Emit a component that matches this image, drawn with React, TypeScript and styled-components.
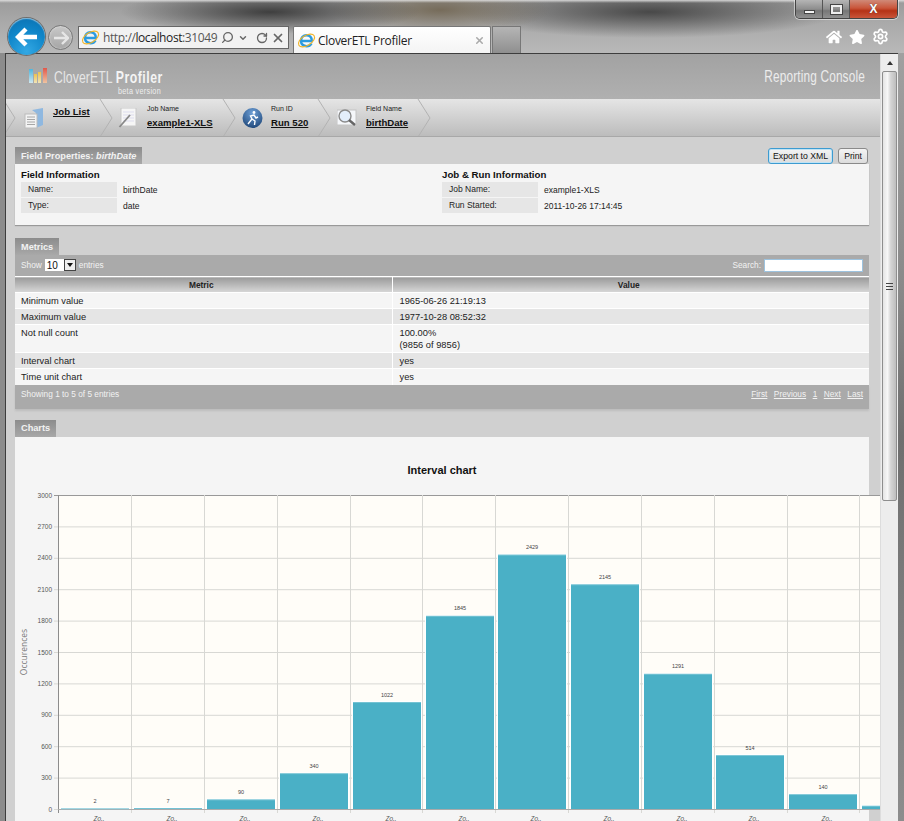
import React from "react";
import styled, { createGlobalStyle } from "styled-components";
import { Search, ChevronDown, RotateCw, X, Settings } from "lucide-react";
import { FaHome, FaStar } from "react-icons/fa";

const Global = createGlobalStyle`
  html, body { margin: 0; padding: 0; background: #888; }
  * { box-sizing: border-box; }
  body { font-family: "Liberation Sans", Arial, sans-serif; font-size: 9px; color: #222; }
`;

const Frame = styled.div`
  width: 904px; height: 821px; overflow: hidden; display: flex; flex-direction: column;
  background:
    linear-gradient(180deg, rgba(235,235,235,.8) 0, rgba(235,235,235,0) 3px),
    radial-gradient(ellipse 150px 22px at 270px 12px, rgba(45,45,45,.85), rgba(45,45,45,0)),
    radial-gradient(ellipse 110px 24px at 440px 10px, rgba(100,85,60,.7), rgba(100,85,60,0)),
    radial-gradient(ellipse 190px 26px at 650px 12px, rgba(50,50,50,.8), rgba(50,50,50,0)),
    linear-gradient(180deg, #9a9a9a 0, #a9a9a9 22px, #b9b9b9 53px);
`;
const Caption = styled.div`height: 19px; display: flex; justify-content: flex-end; padding-right: 6px; flex: none;`;
const WinControls = styled.div`
  display: flex; height: 19px; width: 103px; border: 1px solid #444; border-top: 0;
  border-radius: 0 0 5px 5px; overflow: hidden; box-shadow: 0 0 0 1px rgba(255,255,255,.5);
`;
const WinBtn = styled.div<{ $close?: boolean; $w: number }>`
  width: ${p => p.$w}px; display: flex; align-items: center; justify-content: center;
  border-right: 1px solid #555;
  background: ${p => p.$close
    ? "linear-gradient(180deg,#d08a78 0,#c9553a 45%,#b53216 60%,#c9553a 100%)"
    : "linear-gradient(180deg,#b5b5b5 0,#8e8e8e 50%,#777 60%,#909090 100%)"};
  &:last-child { border-right: 0; }
`;
const MinGlyph = styled.span`width: 11px; height: 4px; margin-top: 6px; background: #f4f4f4; border: 1px solid #444;`;
const MaxGlyph = styled.span`width: 11px; height: 9px; background: transparent; border: 2px solid #eee; outline: 1px solid #444; outline-offset: 0;`;
const CloseGlyph = styled.span`color: #fff; font: bold 12px "Liberation Sans", sans-serif; text-shadow: 0 0 1px #333; line-height: 1;`;

const NavBar = styled.div`height: 34px; flex: none; display: flex; align-items: flex-start; padding: 7px 0 0 8px; position: relative;`;
const BackBtn = styled.div`
  width: 37px; height: 37px; margin-top: -8px; flex: none; border-radius: 50%; display: flex; align-items: center; justify-content: center;
  background: radial-gradient(circle at 50% 90%, #33a8e4 0, #0f86c9 55%, #0a6eae 100%);
  box-shadow: 0 0 0 1px #6d6d6d, inset 0 1px 1px rgba(255,255,255,.5); z-index: 2;
`;
const ForwardBtn = styled.div`
  width: 25px; height: 25px; margin: -1px 0 0 3px; flex: none; border-radius: 50%; display: flex; align-items: center; justify-content: center;
  background: linear-gradient(180deg,#c8c8c8,#a6a6a6); border: 1px solid #777;
  box-shadow: inset 0 0 2px #eee;
`;
const AddressBar = styled.div`
  width: 211px; height: 23px; margin-left: 5px; flex: none; display: flex; align-items: center; padding: 0 2px 0 2px;
  background: #f2f2f2; border: 1px solid #666; color: #555;
  font: 12px "Open Sans", sans-serif; letter-spacing: -.4px; white-space: nowrap;
  b { font-weight: 400; color: #222; }
`;
const AddressText = styled.span`margin: 0 4px 0 3px;`;
const AddressIcons = styled.span`display: flex; align-items: center; gap: 2px; color: #666; margin-left: 0;`;
const BrowserTab = styled.div`
  width: 198px; height: 27px; margin-left: 4px; flex: none; display: flex; align-items: center; padding: 0 5px 0 3px; gap: 2px;
  background: linear-gradient(180deg,#fff,#f4f4f4); border: 1px solid #777; border-bottom: 0; border-radius: 2px 2px 0 0;
  font: 12px "Open Sans", sans-serif; letter-spacing: -.3px; color: #222;
`;
const TabTitle = styled.span`flex: 1; white-space: nowrap;`;
const NewTab = styled.div`width: 29px; height: 27px; flex: none; margin-left: 1px; background: linear-gradient(180deg,#b5b5b5,#8f8f8f); border: 1px solid #777; border-bottom: 0;`;
const ToolIcons = styled.div`margin-left: auto; display: flex; align-items: center; gap: 7px; padding: 2px 15px 0 0; color: #fff;`;

const Body = styled.div`flex: 1; display: flex; min-height: 0; padding-left: 5px;
  box-shadow: inset 5px 0 0 #8c8c8c;`;
const Viewport = styled.div`flex: 1; display: flex; min-width: 0; border: 1px solid #3d3d3d; border-bottom: 0; background: #d0d0d0;`;
const Page = styled.div`width: 874px; height: 100%; overflow: hidden; flex: none; background: #d0d0d0;`;
const Bezel = styled.div`width: 6px; flex: none;
  background: linear-gradient(180deg,#a0a0a0,#8a8a8a 30%,#6f6f6f 50%,#8d8d8d 100%);`;

const ScrollBar = styled.div`flex: 1; background: #ededed; border-left: 1px solid #ddd; padding: 0 1px; display: flex; flex-direction: column; align-items: center;`;
const ScrollUp = styled.div`height: 17px; display: flex; align-items: center; justify-content: center;
  &::before { content: ""; border: 3px solid transparent; border-bottom: 4px solid #333; border-top: 0; }`;
const Thumb = styled.div`
  width: 15px; height: 430px; border: 1px solid #8e8e8e; border-radius: 2px; display: flex; align-items: center; justify-content: center;
  background: linear-gradient(90deg,#e4e4e4 0,#f7f7f7 35%,#d4d4d4 60%,#bdbdbd 100%);
`;
const Grip = styled.span`width: 7px; height: 7px; border-top: 1px solid #444; border-bottom: 1px solid #444; position: relative;
  &::after { content: ""; position: absolute; left: 0; right: 0; top: 2px; height: 1px; background: #444; }`;

const Header = styled.header`height: 45px; display: flex; justify-content: space-between; padding: 14px 15px 0 23px;
  background: linear-gradient(180deg,#a2a2a2,#b0b0b0);`;
const Logo = styled.div`display: flex; align-items: flex-start; gap: 6px;`;
const LogoBlock = styled.div`width: 107px; display: flex; flex-direction: column;`;
const LogoText = styled.div`font: 17px "Liberation Sans", sans-serif; color: #e6e6e6; line-height: 20px; letter-spacing: .15px; white-space: nowrap;
  transform: scaleX(.72); transform-origin: left center;
  b { color: #f4f4f4; letter-spacing: .7px; }`;
const Beta = styled.div`font: 9px "Liberation Sans", sans-serif; color: #eee; text-align: right; line-height: 9px; letter-spacing: .4px; margin-top: -1px;
  transform: scaleX(.8); transform-origin: right center;`;
const Console = styled.div`font: 16px "Liberation Sans", sans-serif; color: #ececec; letter-spacing: .2px; white-space: nowrap;
  transform: scaleX(.74); transform-origin: right center;`;

const Breadcrumb = styled.nav`height: 38px; display: flex; align-items: stretch; overflow: hidden;
  background: linear-gradient(180deg,#e5e5e5,#bcbcbc); border-bottom: 1px solid #a8a8a8;`;
const Crumb = styled.div<{ $w: number; $pad: number }>`width: ${p => p.$w}px; display: flex; align-items: flex-start; gap: 8px; padding: 0 0 0 ${p => p.$pad}px; flex: none;`;
const CrumbIcon = styled.div`width: 21px; height: 38px; display: flex; align-items: center; flex: none;`;
const CrumbText = styled.div`display: flex; flex-direction: column; padding-top: 5px;`;
const CrumbLabel = styled.span`font-size: 7px; line-height: 9px; height: 13px; color: #222;`;
const CrumbLink = styled.a<{ $solo?: boolean }>`font-size: 9.6px; font-weight: 700; color: #111; text-decoration: underline; line-height: 12px; padding-top: ${p => p.$solo ? 2 : 0}px; white-space: nowrap;`;
const Sep = styled.svg<{ $first?: boolean }>`flex: none; display: block; margin-left: ${p => p.$first ? -4 : 0}px;`;

const Content = styled.main`padding: 9px 11px 0 9px;`;
const SectionHead = styled.div`display: flex; justify-content: space-between; align-items: flex-end; height: 18px;`;
const SectionTab = styled.div`
  height: 17px; padding: 0 6px; display: flex; align-items: center; font-weight: 700; font-size: 9.2px; color: #f2f2f2;
  background: linear-gradient(180deg,#8c8c8c,#a8a8a8); white-space: nowrap;
  i { font-style: italic; }
`;
const HeadButtons = styled.div`display: flex; gap: 5px; padding-right: 1px; align-self: flex-start; margin-top: 2px;`;
const Btn = styled.button<{ $focus?: boolean }>`
  height: 16px; padding: 0 ${p => p.$focus ? 4 : 5}px; font: 8.7px "Liberation Sans", sans-serif; color: #111; border-radius: 3px;
  border: 1px solid ${p => p.$focus ? "#3d9bd0" : "#8a8a8a"};
  background: linear-gradient(180deg,#f4f4f4,#dcdcdc);
  box-shadow: ${p => p.$focus ? "inset 0 0 0 1px #bfe3f5" : "none"};
`;
const InfoPanel = styled.section`
  height: 61px; background: #f5f5f5; box-shadow: 0 1px 1px #999; padding: 5px 6px 0; display: grid; grid-template-columns: 421px 1fr; margin-bottom: 12px;
`;
const InfoTitle = styled.h3`margin: 0 0 1px; font-size: 9.7px; font-weight: 700; line-height: 12px; color: #111;`;
const InfoRow = styled.div`display: flex; height: 15px; margin-bottom: 1px; align-items: center; font-size: 8.5px;`;
const InfoKey = styled.div`width: 96px; height: 15px; line-height: 15px; padding-left: 7px; background: #e6e6e6; font-weight: 400;`;
const InfoVal = styled.div`padding-left: 6px;`;

const Toolbar = styled.div`height: 21px; background: #aaa; color: #f2f2f2; font-size: 8.3px; display: flex; justify-content: space-between; align-items: center; padding: 0 6px; border-bottom: 1px solid #aaa;`;
const ShowBox = styled.div`display: flex; align-items: center; gap: 3px;`;
const SelectBox = styled.div`width: 31px; height: 12px; background: #fff; display: flex; justify-content: space-between; align-items: center; font-size: 10px; color: #111; padding: 0 0 0 2px;`;
const SelectArrow = styled.span`width: 12px; height: 12px; background: #eee; border: 1px solid #444; display: flex; align-items: center; justify-content: center;
  &::before { content: ""; border: 3px solid transparent; border-top: 4px solid #111; border-bottom: 0; }`;
const SearchBox = styled.div`display: flex; align-items: center; gap: 3px;`;
const SearchInput = styled.input`width: 99px; height: 13px; background: #fff; border: 1px solid #9dc3df; padding: 0; margin-right: 0; display: block;`;

const Table = styled.table`width: 100%; border-collapse: collapse; table-layout: fixed; font-size: 9px;`;
const Th = styled.th`height: 16px; padding: 0 4px 0 0; font-size: 8.4px; font-weight: 700; color: #222; border-top: 1px solid #fff; border-right: 1px solid #fff;
  background: linear-gradient(180deg,#9a9a9a,#d8d8d8); &:last-child { border-right: 0; }`;
const Td = styled.td<{ $alt?: boolean }>`
  padding: 2px 6px 1px; height: 16px; line-height: 12px; vertical-align: top; color: #222; font-size: 9.3px;
  background: ${p => p.$alt ? "#e5e5e5" : "#f5f5f5"}; border-top: 1px solid #fff; border-right: 1px solid #fff;
  &:last-child { border-right: 0; padding-left: 7px; }
`;
const TableFooter = styled.div`height: 24px; background: #aaa; box-shadow: 0 2px 2px #bdbdbd; color: #f2f2f2; font-size: 8.3px; display: flex; justify-content: space-between; padding: 4px 6px 0; margin-bottom: 10px; font-weight: 400;`;
const Pager = styled.div`display: flex; gap: 6.5px; a { color: #f2f2f2; text-decoration: underline; }`;

const ChartPanel = styled.section`background: #f5f5f5; height: 400px;`;
const ChartTitle = styled.h2`margin: 0; padding-top: 26px; height: 53px; text-align: center; font-size: 11px; line-height: 14px; font-weight: 700; color: #111; padding-right: 0;`;
const ChartSvg = styled.svg`display: block; overflow: visible;`;

const Chevron = ({ first }: { first?: boolean }) => (
  <Sep $first={first} width="14" height="38" viewBox="0 0 14 38">
    <path d="M1 0 L13 19 L1 38" fill="none" stroke="#b2b2b2" strokeWidth="1" />
  </Sep>
);

const IeLogo = ({ s = 20 }: { s?: number }) => (
  <svg width={s} height={s} viewBox="0 0 20 20">
    <path d="M5 10.5 H15.6 C15.8 6.6 13.2 4.4 10 4.4 C6.6 4.4 4.2 7 4.2 10.4 C4.2 13.8 6.8 16 10 16 C12.4 16 14.2 15 15.2 13" fill="none" stroke="#2b9be0" strokeWidth="2.6" />
    <ellipse cx="10" cy="10" rx="9.5" ry="5.2" transform="rotate(-32 10 10)" fill="none" stroke="#f0b429" strokeWidth="1.2" />
  </svg>
);

const DocsIcon = () => (
  <svg width="20" height="21" viewBox="0 0 20 21">
    <path d="M8 2 L19 0 V17 L12 20 V5 Z" fill="#8fb8e0" />
    <rect x="1" y="6" width="12" height="14" fill="#f3f3f3" stroke="#bcbcbc" />
    <path d="M3 9h8M3 11.5h8M3 14h8M3 16.5h8" stroke="#a6a6a6" />
  </svg>
);
const PencilIcon = () => (
  <svg width="19" height="20" viewBox="0 0 19 20">
    <rect x="3" y="0" width="15" height="18" fill="#f6f6f6" stroke="#c8c8c8" />
    <path d="M5 4h11M5 7h11M5 10h11M5 13h11" stroke="#dde" />
    <path d="M1.5 19 L12 7" stroke="#888" strokeWidth="1.8" />
  </svg>
);
const RunIcon = () => (
  <svg width="21" height="20" viewBox="0 0 21 20">
    <defs>
      <radialGradient id="rg" cx="50%" cy="25%" r="80%">
        <stop offset="0" stopColor="#6d9fd6" />
        <stop offset="1" stopColor="#1d4577" />
      </radialGradient>
    </defs>
    <circle cx="10.5" cy="10" r="10" fill="url(#rg)" />
    <circle cx="12" cy="4.5" r="1.4" fill="#fff" />
    <path d="M6 16 L10 11 L8.5 8 L12 7 L14 10 L16 9 M10 11 L13 13 L12.5 17" fill="none" stroke="#fff" strokeWidth="1.4" />
  </svg>
);
const LensIcon = () => (
  <svg width="20" height="20" viewBox="0 0 20 20">
    <rect x="0" y="2" width="19" height="15" fill="#f5f7fa" stroke="#c4c4c4" />
    <circle cx="8" cy="8" r="6" fill="#e3eefb" stroke="#8a8a8a" strokeWidth="1.4" />
    <path d="M12 12 L18 17" stroke="#666" strokeWidth="2.4" />
  </svg>
);
const LogoBars = () => (
  <svg width="19" height="17" viewBox="0 0 19 17">
    <defs>
      <linearGradient id="b1" x1="0" y1="0" x2="0" y2="1"><stop offset="0" stopColor="#4fb6dd" /><stop offset="1" stopColor="#cfe6ee" /></linearGradient>
      <linearGradient id="b2" x1="0" y1="0" x2="0" y2="1"><stop offset="0" stopColor="#eec34a" /><stop offset="1" stopColor="#f0e3b8" /></linearGradient>
      <linearGradient id="b3" x1="0" y1="0" x2="0" y2="1"><stop offset="0" stopColor="#e2574a" /><stop offset="1" stopColor="#eec3a0" /></linearGradient>
    </defs>
    <rect x="0" y="1" width="4" height="14" fill="url(#b1)" />
    <rect x="5" y="6" width="3" height="9" fill="url(#b2)" />
    <rect x="9" y="4" width="3" height="11" fill="url(#b2)" />
    <rect x="14" y="0" width="4" height="15" fill="url(#b3)" />
  </svg>
);

const BARS = [
  { v: 2, x: 61 }, { v: 7, x: 134 }, { v: 90, x: 207 }, { v: 340, x: 280 }, { v: 1022, x: 353 },
  { v: 1845, x: 426 }, { v: 2429, x: 498 }, { v: 2145, x: 571 }, { v: 1291, x: 644 }, { v: 514, x: 716 }, { v: 140, x: 789 }, { v: 30, x: 862 },
];
const GRIDX = [131, 204, 277, 350, 422, 495, 568, 641, 714, 787, 859];
const TICKS = [0, 300, 600, 900, 1200, 1500, 1800, 2100, 2400, 2700, 3000];

const Chart = () => {
  // SVG origin = page x 15, y 490
  const ox = -15, oy = -490;
  const y0 = 809, k = 314 / 3000;
  return (
    <ChartSvg width="854" height="331" viewBox="0 0 854 331">
      <g transform={`translate(${ox} ${oy})`} fontFamily="Liberation Sans" >
        <rect x="58" y="495" width="822" height="314" fill="#fffdf8" />
        {TICKS.map(t => (
          <g key={t}>
            <line x1="54" x2="880" y1={y0 - t * k + .5} y2={y0 - t * k + .5} stroke={t === 3000 ? "#999" : "#d8d8d4"} />
            <text x="52" y={y0 - t * k + 2.5} textAnchor="end" fontSize="6.5" fill="#555">{t}</text>
          </g>
        ))}
        {GRIDX.map(x => <line key={x} x1={x + .5} x2={x + .5} y1="495" y2="813" stroke="#d8d8d4" />)}
        <line x1="58.5" x2="58.5" y1="495" y2="813" stroke="#8c8c8c" />
        <line x1="58" x2="880" y1="809.5" y2="809.5" stroke="#aaa" />
        {BARS.map(b => {
          const h = Math.max(b.v * k, b.v > 5 ? 1 : .4);
          return (
            <g key={b.x}>
              <rect x={b.x - 1} y={y0 - h - 1} width="70" height={h + 1} fill="#fff" />
              <rect x={b.x} y={y0 - h} width="68" height={h} fill="#4ab0c6" />
              <rect x={b.x} y={y0 - h} width="68" height=".7" fill="#86cbd9" />
              {b.v !== 30 && <text x={b.x + 34} y={y0 - h - 5.5} textAnchor="middle" fontSize="5.5" fill="#444">{b.v}</text>}
            </g>
          );
        })}
        <text transform="translate(27 652) rotate(-90)" textAnchor="middle" fontFamily="Open Sans" fontSize="8.5" fill="#777">Occurences</text>
        {BARS.slice(0, 11).map(b => (
          <text key={b.x} x={b.x + 38} y="821" textAnchor="middle" fontFamily="Open Sans" fontStyle="italic" fontSize="7" fill="#555">Zo..</text>
        ))}
      </g>
    </ChartSvg>
  );
};

const RowsData: [string, React.ReactNode][] = [
  ["Minimum value", "1965-06-26 21:19:13"],
  ["Maximum value", "1977-10-28 08:52:32"],
  ["Not null count", <>100.00%<br />(9856 of 9856)</>],
  ["Interval chart", "yes"],
  ["Time unit chart", "yes"],
];

export default function App() {
  return (
    <Frame>
      <Global />
      <Caption>
        <WinControls>
          <WinBtn $w={28}><MinGlyph /></WinBtn>
          <WinBtn $w={27}><MaxGlyph /></WinBtn>
          <WinBtn $close $w={48}><CloseGlyph>X</CloseGlyph></WinBtn>
        </WinControls>
      </Caption>
      <NavBar>
        <BackBtn>
          <svg width="24" height="22" viewBox="0 0 24 22"><path d="M11 3 L3 11 L11 19 M3 11 H22" fill="none" stroke="#fff" strokeWidth="4.4" /></svg>
        </BackBtn>
        <ForwardBtn>
          <svg width="16" height="14" viewBox="0 0 16 14"><path d="M9 1 L15 7 L9 13 M15 7 H1" fill="none" stroke="#e6e6e6" strokeWidth="2.4" /></svg>
        </ForwardBtn>
        <AddressBar>
          <IeLogo s={19} />
          <AddressText>http://<b>localhost</b>:31049</AddressText>
          <AddressIcons>
            <Search size={13} strokeWidth={2.4} style={{ transform: "scaleX(-1)" }} />
            <ChevronDown size={10} strokeWidth={3.4} style={{ marginLeft: 2 }} />
            <RotateCw size={12} strokeWidth={2.6} style={{ marginLeft: 6 }} />
            <X size={14} strokeWidth={3} style={{ marginLeft: 1 }} />
          </AddressIcons>
        </AddressBar>
        <BrowserTab>
          <IeLogo s={19} />
          <TabTitle>CloverETL Profiler</TabTitle>
          <X size={11} strokeWidth={3.4} color="#aaa" />
        </BrowserTab>
        <NewTab />
        <ToolIcons>
          <FaHome size={16} />
          <FaStar size={16} />
          <Settings size={17} strokeWidth={2.4} />
        </ToolIcons>
      </NavBar>
      <Body>
        <Viewport>
          <Page>
            <Header>
              <Logo>
                <LogoBars />
                <LogoBlock>
                  <LogoText>CloverETL <b>Profiler</b></LogoText>
                  <Beta>beta version</Beta>
                </LogoBlock>
              </Logo>
              <Console>Reporting Console</Console>
            </Header>
            <Breadcrumb>
              <Chevron first />
              <Crumb $w={83} $pad={8}>
                <CrumbIcon><DocsIcon /></CrumbIcon>
                <CrumbText><CrumbLink $solo>Job List</CrumbLink></CrumbText>
              </Crumb>
              <Chevron />
              <Crumb $w={109} $pad={5}>
                <CrumbIcon><PencilIcon /></CrumbIcon>
                <CrumbText><CrumbLabel>Job Name</CrumbLabel><CrumbLink>example1-XLS</CrumbLink></CrumbText>
              </Crumb>
              <Chevron />
              <Crumb $w={81} $pad={6}>
                <CrumbIcon><RunIcon /></CrumbIcon>
                <CrumbText><CrumbLabel>Run ID</CrumbLabel><CrumbLink>Run 520</CrumbLink></CrumbText>
              </Crumb>
              <Chevron />
              <Crumb $w={86} $pad={6}>
                <CrumbIcon><LensIcon /></CrumbIcon>
                <CrumbText><CrumbLabel>Field Name</CrumbLabel><CrumbLink>birthDate</CrumbLink></CrumbText>
              </Crumb>
              <Chevron />
            </Breadcrumb>
            <Content>
              <SectionHead>
                <SectionTab>Field Properties:&nbsp;<i>birthDate</i></SectionTab>
                <HeadButtons>
                  <Btn $focus>Export to XML</Btn>
                  <Btn>Print</Btn>
                </HeadButtons>
              </SectionHead>
              <InfoPanel>
                <div>
                  <InfoTitle>Field Information</InfoTitle>
                  <InfoRow><InfoKey>Name:</InfoKey><InfoVal>birthDate</InfoVal></InfoRow>
                  <InfoRow><InfoKey>Type:</InfoKey><InfoVal>date</InfoVal></InfoRow>
                </div>
                <div>
                  <InfoTitle>Job &amp; Run Information</InfoTitle>
                  <InfoRow><InfoKey>Job Name:</InfoKey><InfoVal>example1-XLS</InfoVal></InfoRow>
                  <InfoRow><InfoKey>Run Started:</InfoKey><InfoVal>2011-10-26 17:14:45</InfoVal></InfoRow>
                </div>
              </InfoPanel>
              <SectionHead>
                <SectionTab>Metrics</SectionTab>
              </SectionHead>
              <Toolbar>
                <ShowBox>Show <SelectBox>10<SelectArrow /></SelectBox> entries</ShowBox>
                <SearchBox>Search: <SearchInput /></SearchBox>
              </Toolbar>
              <Table>
                <colgroup><col style={{ width: 377 }} /><col /></colgroup>
                <thead><tr><Th>Metric</Th><Th>Value</Th></tr></thead>
                <tbody>
                  {RowsData.map(([k, v], i) => (
                    <tr key={k}>
                      <Td $alt={i % 2 === 1}>{k}</Td>
                      <Td $alt={i % 2 === 1}>{v}</Td>
                    </tr>
                  ))}
                </tbody>
              </Table>
              <TableFooter>
                <span>Showing 1 to 5 of 5 entries</span>
                <Pager><a>First</a><a>Previous</a><a>1</a><a>Next</a><a>Last</a></Pager>
              </TableFooter>
              <SectionHead>
                <SectionTab>Charts</SectionTab>
              </SectionHead>
              <ChartPanel>
                <ChartTitle>Interval chart</ChartTitle>
                <Chart />
              </ChartPanel>
            </Content>
          </Page>
          <ScrollBar>
            <ScrollUp />
            <Thumb><Grip /></Thumb>
          </ScrollBar>
        </Viewport>
        <Bezel />
      </Body>
    </Frame>
  );
}
